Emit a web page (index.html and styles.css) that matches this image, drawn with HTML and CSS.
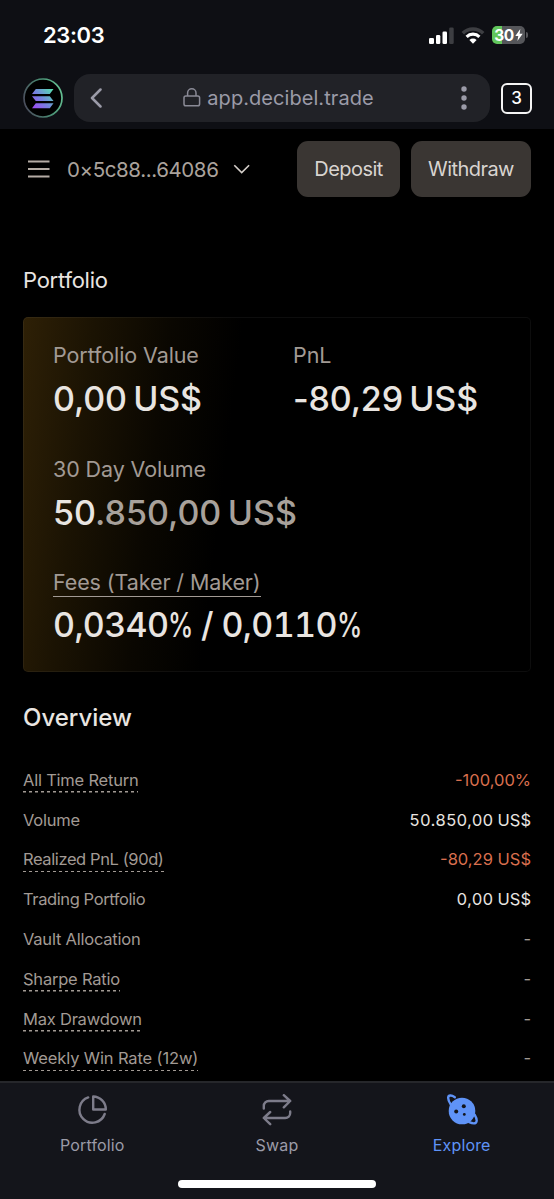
FILE: index.html
```html
<!DOCTYPE html>
<html lang="en">
<head>
    <meta charset="UTF-8">
    <meta name="viewport" content="width=device-width, initial-scale=1.0">
    <title>Portfolio</title>
    <link rel="stylesheet" href="styles.css">
</head>

<body>
    <header class="browser">
        <div class="status">
            <span class="time">23:03</span>
            <div class="status-icons">
                <svg width="25" height="17" viewBox="0 0 25 17">
                    <rect x="0" y="11" width="5" height="6" rx="1.3" fill="#fff"/>
                    <rect x="7" y="8" width="4.3" height="9" rx="1.3" fill="#fff"/>
                    <rect x="13.5" y="4.5" width="4.5" height="12.5" rx="1.3" fill="#fff"/>
                    <rect x="20.2" y="0.5" width="4.5" height="16.5" rx="1.3" fill="#3d3e42"/>
                </svg>
                <svg class="wifi" width="24" height="17" viewBox="0 0 24 17">
                    <path d="M1.8 6.2a14.5 14.5 0 0 1 20.4 0" fill="none" stroke="#3d3e42" stroke-width="3.6"/>
                    <path d="M5.6 9.8a9.1 9.1 0 0 1 12.8 0" fill="none" stroke="#fff" stroke-width="3.1"/>
                    <path d="M8.4 13a5.2 5.2 0 0 1 7.2 0L12 16.8z" fill="#fff"/>
                </svg>
                <div class="battery">
                    <span>30</span>
                    <svg width="8" height="12" viewBox="0 0 8 12"><path d="M5.3 0 .3 7h3L2.4 12 7.7 4.8H4.6z" fill="#fff"/></svg>
                </div>
                <i class="battery-cap"></i>
            </div>
        </div>
        <div class="address-row">
            <svg class="avatar" width="40" height="40" viewBox="0 0 40 40">
                <defs>
                    <linearGradient id="ring" x1="0" y1="0.6" x2="1" y2="0.3">
                        <stop offset="0" stop-color="#4a4e5c"/>
                        <stop offset="0.6" stop-color="#4a9275"/>
                        <stop offset="1" stop-color="#66c294"/>
                    </linearGradient>
                    <linearGradient id="sol" gradientUnits="userSpaceOnUse" x1="10" y1="29" x2="30" y2="11">
                        <stop offset="0" stop-color="#9c4cf5"/>
                        <stop offset="0.45" stop-color="#7484dd"/>
                        <stop offset="1" stop-color="#54e3ad"/>
                    </linearGradient>
                </defs>
                <circle cx="20" cy="20" r="19" fill="#000" stroke="url(#ring)" stroke-width="1.7"/>
                <path d="M12.8 11H30.5L26.8 16H9zM9 18.2H26.8L30.5 23H12.8zM12.8 25.2H30.5L26.8 30.2H9z" fill="url(#sol)"/>
            </svg>
            <div class="address">
                <svg class="back" width="12" height="20" viewBox="0 0 12 20"><path d="M10.5 1.5 2 10l8.5 8.5" fill="none" stroke="#9b9ba8" stroke-width="2.5" stroke-linecap="round" stroke-linejoin="round"/></svg>
                <div class="url">
                    <svg width="18" height="19" viewBox="0 0 18 19" fill="none" stroke="#8a8a96" stroke-width="1.5"><rect x="1" y="8" width="15.6" height="9.8" rx="1.8"/><path d="M4.6 8V5a4.2 4.2 0 0 1 8.4 0v3"/></svg>
                    <span>app.decibel.trade</span>
                </div>
                <svg class="dots" width="6" height="24" viewBox="0 0 6 24" fill="#9b9ba8"><circle cx="3" cy="3" r="2.7"/><circle cx="3" cy="12" r="2.7"/><circle cx="3" cy="21" r="2.7"/></svg>
            </div>
            <div class="tabs-count">3</div>
        </div>
    </header>

    <main>
        <div class="account">
            <svg width="22" height="18" viewBox="0 0 22 18"><path d="M0 1.5h21.5M0 9h21.5M0 16.5h21.5" stroke="#b5aca5" stroke-width="1.8"/></svg>
            <span class="wallet">0×5c88...64086</span>
            <svg class="chevron" width="18" height="10" viewBox="0 0 18 10"><path d="m1.3 1.2 7.4 7.4 7.4-7.4" fill="none" stroke="#d5cfca" stroke-width="1.6"/></svg>
            <button class="btn btn-deposit"><span>Deposit</span></button>
            <button class="btn btn-withdraw"><span>Withdraw</span></button>
        </div>

        <h1>Portfolio</h1>

        <section class="card">
            <div class="stat">
                <div class="label">Portfolio Value</div>
                <div class="value">0,00 US$</div>
            </div>
            <div class="stat">
                <div class="label">PnL</div>
                <div class="value">-80,29 US$</div>
            </div>
            <div class="stat wide">
                <div class="label">30 Day Volume</div>
                <div class="value value-volume">50<span class="dim">.850,00 US$</span></div>
            </div>
            <div class="stat wide">
                <div class="label"><span class="fees">Fees (Taker / Maker)</span></div>
                <div class="value value-fees">0,0340<span class="pct">%</span> / 0,0110<span class="pct">%</span></div>
            </div>
        </section>

        <h2>Overview</h2>

        <dl class="overview">
            <div class="row"><dt class="hint">All Time Return</dt><dd class="loss">-100,00%</dd></div>
            <div class="row"><dt>Volume</dt><dd>50.850,00 US$</dd></div>
            <div class="row"><dt class="hint tight">Realized PnL (90d)</dt><dd class="loss">-80,29 US$</dd></div>
            <div class="row"><dt class="tight">Trading Portfolio</dt><dd>0,00 US$</dd></div>
            <div class="row"><dt>Vault Allocation</dt><dd class="empty">-</dd></div>
            <div class="row"><dt class="hint">Sharpe Ratio</dt><dd class="empty">-</dd></div>
            <div class="row"><dt class="hint">Max Drawdown</dt><dd class="empty">-</dd></div>
            <div class="row"><dt class="hint loose">Weekly Win Rate (12w)</dt><dd class="empty">-</dd></div>
        </dl>
    </main>

    <footer>
        <nav>
            <a class="tab">
                <svg width="32" height="32" viewBox="0 0 32 32" fill="none" stroke="#7d7c8a" stroke-width="2.4" stroke-linecap="round" stroke-linejoin="round"><path d="M12.2 3.4A13 13 0 1 0 28.7 20"/><path d="M17.2 2.5V15.5H29.8A12.9 12.9 0 0 0 17.2 2.5z"/></svg>
                <span>Portfolio</span>
            </a>
            <a class="tab">
                <svg width="32" height="32" viewBox="0 0 32 32" fill="none" stroke="#7d7c8a" stroke-width="2.4" stroke-linecap="round" stroke-linejoin="round"><path d="M2.8 14.5V12a5 5 0 0 1 5-5H29M22.8 1.2 29.2 7l-6.4 6.3M29.2 17.5V19a5 5 0 0 1-5 5H3M9.2 18 2.8 24l6.4 6.2"/></svg>
                <span>Swap</span>
            </a>
            <a class="tab active">
                <svg width="32" height="32" viewBox="0 0 32 32"><circle cx="16" cy="17" r="13.3" fill="#5f93f7"/><path d="M8.8 3.2C5.5.9 2.4 1 2.2 3.6c-.2 2.3.8 4.4 2.6 7.1M28.6 20.7c2.2 3.8 2.6 6.8 1.2 8.1-1.5 1.2-3.8.6-6.6-.6" fill="none" stroke="#5f93f7" stroke-width="2.4" stroke-linecap="round"/><g fill="#14151b"><circle cx="17.8" cy="12.2" r="2"/><circle cx="10.2" cy="17.5" r="2"/><circle cx="18.3" cy="20.4" r="1.4"/></g></svg>
                <span>Explore</span>
            </a>
        </nav>
        <div class="home-bar"></div>
    </footer>
</body>
</html>
```
FILE: styles.css
```css
* {
    box-sizing: border-box;
}
body {
    margin: 0;
    height: 1199px;
    display: flex;
    flex-direction: column;
    overflow: hidden;
    font-family: Inter, sans-serif;
    background: #000;
    color: #e9e5e1;
}
h1, h2, dl, dd {
    margin: 0;
}
svg {
    display: block;
    flex: none;
}

/* browser bar */
.browser {
    height: 129px;
    background: #0e0f14;
    flex: none;
}
.status {
    height: 74px;
    padding: 0 26px 4px 43px;
    display: flex;
    align-items: center;
    justify-content: space-between;
}
.time {
    font-size: 22px;
    font-weight: 600;
    letter-spacing: -0.4px;
    color: #fff;
}
.status-icons {
    display: flex;
    align-items: center;
}
.wifi {
    margin: 0 7px;
}
.battery {
    width: 33px;
    height: 18px;
    border-radius: 5px;
    background: linear-gradient(to right, #62c65c 10px, #55565a 10px);
    display: flex;
    align-items: center;
    justify-content: center;
    gap: 1px;
    color: #fff;
    font-size: 15.5px;
    font-weight: 700;
    letter-spacing: -0.5px;
}
.battery-cap {
    width: 2px;
    height: 6px;
    margin-left: 1px;
    border-radius: 0 2px 2px 0;
    background: #55565a;
}
.address-row {
    display: flex;
    align-items: center;
    padding: 0 22px 0 23px;
}
.address {
    width: 416px;
    flex: none;
    height: 48px;
    margin: 0 11px;
    padding: 0 23px 0 16px;
    border-radius: 16px;
    background: #212227;
    display: flex;
    align-items: center;
    justify-content: space-between;
}
.url {
    display: flex;
    align-items: center;
    gap: 6px;
    margin-right: 6px;
    font-size: 20px;
    letter-spacing: 0.06px;
    color: #9b9ba8;
}
.url svg {
    margin-top: -2px;
}
.tabs-count {
    width: 31px;
    height: 31px;
    border: 2px solid #f4f4f4;
    border-radius: 6px;
    color: #fff;
    font-size: 17px;
    font-weight: 500;
    line-height: 27px;
    text-align: center;
}

/* page */
main {
    flex: 1;
    min-height: 0;
    overflow: hidden;
    padding: 12px 23px 0;
}
.account {
    height: 56px;
    padding-left: 5px;
    display: flex;
    align-items: center;
}
.wallet {
    margin: 0 14px 0 17px;
    font-size: 20.5px;
    letter-spacing: -0.4px;
    color: #aaa29c;
    width: 152px;
    white-space: nowrap;
}
.btn {
    height: 56px;
    padding: 0;
    border: none;
    border-radius: 11px;
    background: #3a3633;
    color: #d8d4d0;
    font-family: inherit;
    font-size: 20px;
    letter-spacing: -0.55px;
}
.btn-deposit {
    width: 103px;
    margin-left: auto;
    margin-right: 11px;
}
.btn-withdraw {
    width: 120px;
}
h1 {
    margin-top: 69px;
    font-size: 22px;
    font-weight: 400;
    line-height: 28px;
    letter-spacing: -0.25px;
}
.card {
    height: 355px;
    margin-top: 23px;
    padding: 23px 29px;
    display: grid;
    grid-template-columns: 240px 1fr;
    grid-template-rows: 114px 113px 1fr;
    border: 1px solid rgba(255, 255, 255, 0.05);
    border-radius: 5px;
    background: linear-gradient(97deg, #2e2006 0%, #1b1303 13%, #0a0701 27%, #000 40%) border-box;
}
.wide {
    grid-column: 1 / 3;
}
.label {
    font-size: 21.5px;
    line-height: 28px;
    letter-spacing: -0.1px;
    color: #a29a94;
}
.fees {
    display: inline-block;
    border-bottom: 1.5px solid #a29a94;
}
.value {
    margin-top: 3px;
    font-size: 34px;
    font-weight: 500;
    line-height: 54px;
    letter-spacing: -0.15px;
    word-spacing: -2.5px;
    white-space: nowrap;
}
.value-volume {
    letter-spacing: 0;
}
.value-fees {
    margin-top: 1px;
    font-variant-numeric: tabular-nums;
    letter-spacing: -0.65px;
    word-spacing: 0;
}
/* narrow percent sign */
.pct {
    display: inline-block;
    margin-right: -9px;
    transform: scaleX(0.75);
    transform-origin: left;
}
.dim {
    color: #a8a19b;
}
h2 {
    margin-top: 29px;
    font-size: 24px;
    font-weight: 500;
    line-height: 34px;
}
.overview {
    margin-top: 25px;
}
.row {
    height: 39.8px;
    display: flex;
    align-items: center;
    justify-content: space-between;
    font-size: 16.5px;
}
dt {
    color: #a29a94;
    line-height: 26px;
    letter-spacing: -0.22px;
}
.tight {
    letter-spacing: -0.4px;
}
.loose {
    letter-spacing: -0.13px;
}
dd {
    font-variant-numeric: tabular-nums;
}
.hint {
    background: repeating-linear-gradient(to right, #a29a94 0 3px, transparent 3px 6px) left bottom / 100% 1.5px no-repeat;
}
.loss, .empty {
    font-variant-numeric: normal;
}
.loss {
    color: #d96f4e;
}
.empty {
    color: #a29a94;
}

/* bottom tabs */
footer {
    height: 118px;
    flex: none;
    border-top: 2px solid #26272b;
    background: #14151b;
}
nav {
    display: grid;
    grid-template-columns: repeat(3, 1fr);
    height: 97px;
    padding-top: 11px;
}
.tab {
    display: flex;
    flex-direction: column;
    align-items: center;
    font-size: 16px;
    letter-spacing: 0.15px;
    color: #9b9ba8;
}
.tab span {
    margin-top: 9px;
}
.active {
    color: #5f93f7;
}
.home-bar {
    width: 198px;
    height: 8px;
    margin: 0 auto;
    border-radius: 4px;
    background: #fff;
}
```
